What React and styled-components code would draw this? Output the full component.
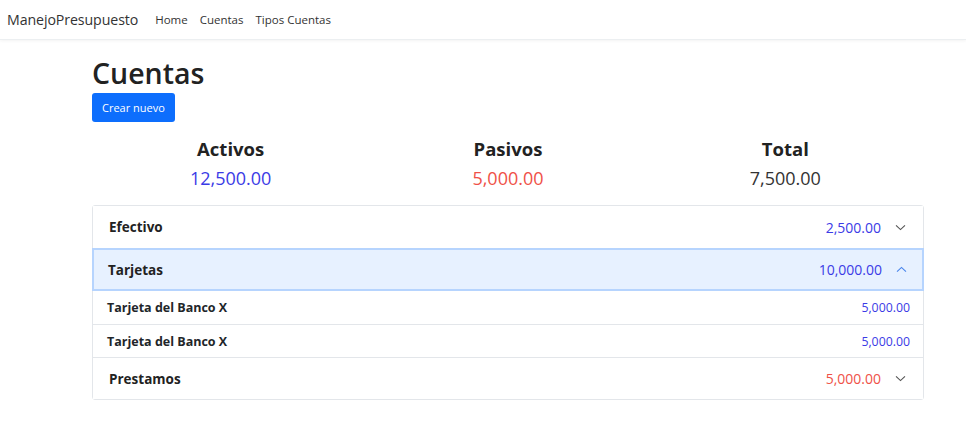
import React from 'react';
import styled, { createGlobalStyle } from 'styled-components';

const GlobalStyle = createGlobalStyle`
  html, body {
    margin: 0;
    padding: 0;
    background: #fff;
    font-family: "Open Sans", "Noto Sans", sans-serif;
    color: #212529;
  }
  * { box-sizing: border-box; }
`;

const Navbar = styled.nav`
  height: 40px;
  display: flex;
  align-items: center;
  padding: 0 7px;
  border-bottom: 1px solid #eceff1;
  box-shadow: 0 1px 3px rgba(0, 0, 0, 0.05);
`;

const Brand = styled.a`
  font-size: 14.2px;
  color: #333;
  margin-right: 17px;
  letter-spacing: -0.1px;
`;

const NavLink = styled.a`
  font-size: 11.5px;
  color: #333;
  margin-right: 12px;
`;

const Container = styled.main`
  width: 832px;
  margin-left: 92px;
  padding-top: 14px;
`;

const Title = styled.h1`
  margin: 0;
  font-size: 28.5px;
  font-weight: 600;
  line-height: 38px;
  color: #222;
`;

const Button = styled.button`
  margin-top: 1px;
  height: 29px;
  padding: 0 10px;
  background: #0d6efd;
  color: #fff;
  border: none;
  border-radius: 3px;
  font-family: inherit;
  font-size: 11px;
`;

const Summary = styled.div`
  display: grid;
  grid-template-columns: repeat(3, 1fr);
  margin-top: 14px;
`;

const SummaryCol = styled.div`
  text-align: center;
`;

const SummaryLabel = styled.div`
  font-size: 18.5px;
  font-weight: 700;
  line-height: 26px;
  color: #222;
`;

const Amount = styled.span`
  color: ${(p) => (p.$tone === 'pos' ? '#3b3be6' : p.$tone === 'neg' ? '#ef5148' : '#333')};
`;

const SummaryAmount = styled(Amount)`
  display: block;
  margin-top: 3px;
  font-size: 18px;
  line-height: 26px;
`;

const Accordion = styled.div`
  margin-top: 14px;
  border: 1px solid #e3e6ea;
  border-radius: 3px;
`;

const Header = styled.div`
  height: ${(p) => (p.$open ? '43px' : '42px')};
  display: flex;
  align-items: center;
  padding: 0 17px 0 16px;
  font-size: 13.5px;
  font-weight: 700;
  color: #222;
  background: ${(p) => (p.$open ? '#e7f1ff' : '#fff')};
  box-shadow: ${(p) => (p.$open ? 'inset 0 0 0 2px #b6d4fe' : 'none')};
  border-top: ${(p) => (p.$first ? 'none' : '1px solid #e3e6ea')};
  ${(p) => p.$open && 'border-top: none; margin: 0 -1px;'}
`;

const HeaderName = styled.span`
  flex: 1;
`;

const HeaderAmount = styled(Amount)`
  font-weight: 400;
  font-size: 14px;
  margin-right: 14px;
`;

const Chevron = styled.svg`
  width: 11px;
  height: 11px;
  fill: none;
  stroke: ${(p) => (p.$open ? '#4a86ec' : '#555')};
  stroke-width: 1.7;
`;

const SubRow = styled.div`
  height: 33px;
  display: flex;
  align-items: center;
  justify-content: space-between;
  padding: 0 13px 0 14px;
  font-size: 12.5px;
  border-top: ${(p) => (p.$first ? 'none' : '1px solid #e3e6ea')};
  font-weight: 700;
`;

const SubAmount = styled(Amount)`
  font-weight: 400;
  font-size: 12.3px;
`;

const ChevronIcon = ({ open }) => (
  <Chevron $open={open} viewBox="0 0 16 16">
    {open ? <path d="M1.5 11l6.5-6 6.5 6" /> : <path d="M1.5 5l6.5 6 6.5-6" />}
  </Chevron>
);

const data = [
  { name: 'Efectivo', total: '2,500.00', tone: 'pos', open: false },
  {
    name: 'Tarjetas',
    total: '10,000.00',
    tone: 'pos',
    open: true,
    items: [
      { name: 'Tarjeta del Banco X', amount: '5,000.00' },
      { name: 'Tarjeta del Banco X', amount: '5,000.00' },
    ],
  },
  { name: 'Prestamos', total: '5,000.00', tone: 'neg', open: false },
];

export default function App() {
  return (
    <>
      <GlobalStyle />
      <Navbar>
        <Brand>ManejoPresupuesto</Brand>
        <NavLink>Home</NavLink>
        <NavLink>Cuentas</NavLink>
        <NavLink>Tipos Cuentas</NavLink>
      </Navbar>
      <Container>
        <Title>Cuentas</Title>
        <Button>Crear nuevo</Button>
        <Summary>
          <SummaryCol>
            <SummaryLabel>Activos</SummaryLabel>
            <SummaryAmount $tone="pos">12,500.00</SummaryAmount>
          </SummaryCol>
          <SummaryCol>
            <SummaryLabel>Pasivos</SummaryLabel>
            <SummaryAmount $tone="neg">5,000.00</SummaryAmount>
          </SummaryCol>
          <SummaryCol>
            <SummaryLabel>Total</SummaryLabel>
            <SummaryAmount>7,500.00</SummaryAmount>
          </SummaryCol>
        </Summary>
        <Accordion>
          {data.map((g, i) => (
            <React.Fragment key={g.name}>
              <Header $open={g.open} $first={i === 0}>
                <HeaderName>{g.name}</HeaderName>
                <HeaderAmount $tone={g.tone}>{g.total}</HeaderAmount>
                <ChevronIcon open={g.open} />
              </Header>
              {g.items &&
                g.items.map((it, j) => (
                  <SubRow key={j} $first={j === 0}>
                    <span>{it.name}</span>
                    <SubAmount $tone="pos">{it.amount}</SubAmount>
                  </SubRow>
                ))}
            </React.Fragment>
          ))}
        </Accordion>
      </Container>
    </>
  );
}
